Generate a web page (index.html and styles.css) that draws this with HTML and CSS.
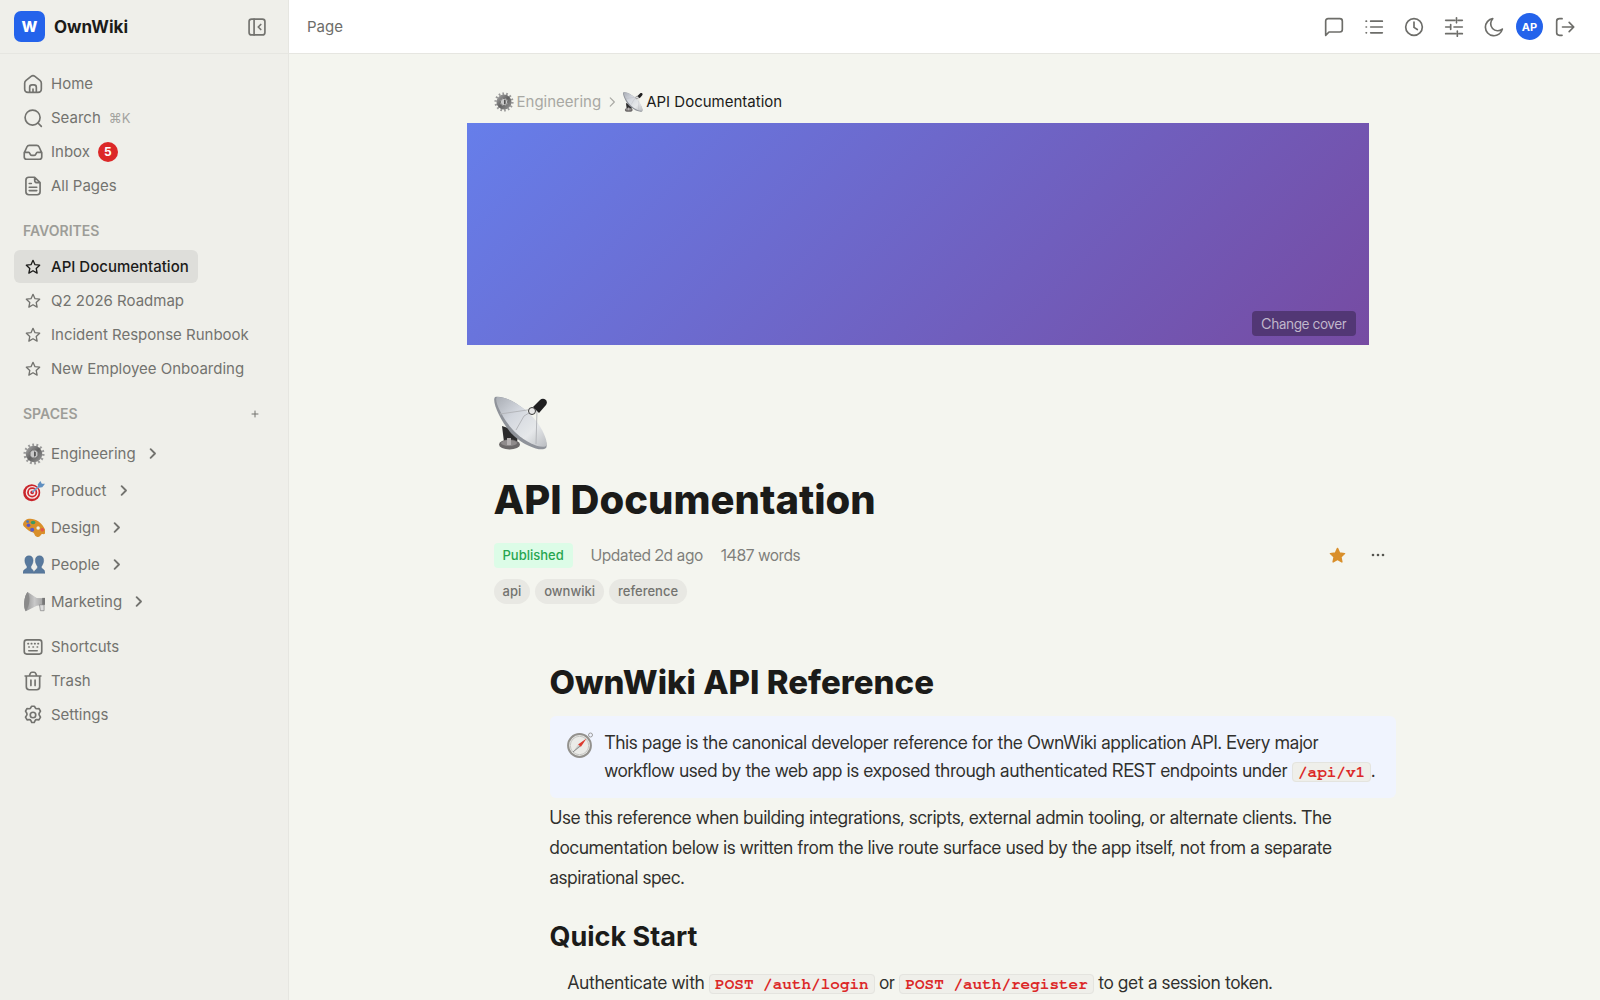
FILE: index.html
```html
<!DOCTYPE html>
<html lang="en">
<head>
<meta charset="utf-8">
<meta name="viewport" content="width=device-width, initial-scale=1">
<title>API Documentation - OwnWiki</title>
<link rel="stylesheet" href="styles.css">
</head>
<body>
<svg class="sprite" aria-hidden="true">
  <defs>
    <linearGradient id="dish-fill" x1="0" y1="0" x2="1" y2="1">
      <stop offset="0" stop-color="#a9adb4"/><stop offset=".35" stop-color="#d3d7de"/><stop offset=".7" stop-color="#e6e8ea"/><stop offset="1" stop-color="#b9bcc0"/>
    </linearGradient>
    <linearGradient id="gear-fill" x1="0" y1="0" x2="1" y2="1">
      <stop offset="0" stop-color="#9c9c9c"/><stop offset=".5" stop-color="#626262"/><stop offset="1" stop-color="#8c8c8c"/>
    </linearGradient>
    <linearGradient id="horn-fill" x1="0" y1="0" x2="1" y2="0">
      <stop offset="0" stop-color="#8b8b8b"/><stop offset=".5" stop-color="#c9c9c9"/><stop offset="1" stop-color="#9a9a9a"/>
    </linearGradient>
    <symbol id="dish" viewBox="0 0 54 54">
      <path d="M8 30l6 2 10 8-1 6H10z" fill="#2b2b2c"/>
      <ellipse cx="15.500" cy="48.500" rx="10.500" ry="5" fill="#6b6868"/>
      <ellipse cx="15" cy="47" rx="8" ry="3" fill="#8f8b8b"/>
      <path d="M13 42h4v7h-4z" fill="#b5b1b1"/>
      <path d="M1 1C9-1 25 7 36 19s19 29 16 33c-4 4-20-1-32-12S-3 5 1 1z" fill="#8f939a"/>
      <path d="M3 1C11 0 26 8 37 19s18 28 15 31c-4 3-18-2-30-13S-1 4 3 1z" fill="url(#dish-fill)"/>
      <path d="M6 18l34-5M22 34l8-14 10-6M42 48l1-34" fill="none" stroke="#b4b6ba" stroke-width="1"/>
      <circle cx="38" cy="15" r="3.500" fill="#e8e8e8" stroke="#3a3a3a"/>
      <path d="M39 11l7-7c3-3 9 0 6 5l-7 8z" fill="#1f1f20"/>
    </symbol>
    <symbol id="gear" viewBox="0 0 24 24">
      <circle cx="12" cy="12" r="10" fill="none" stroke="#9a9a9a" stroke-width="3" stroke-dasharray="2 2.488"/>
      <circle cx="12" cy="12" r="6.800" fill="none" stroke="url(#gear-fill)" stroke-width="4.400"/>
      <circle cx="12" cy="12" r="4.400" fill="#c9c9c9" stroke="#666" stroke-width="1"/>
      <path d="M12 9l2 1v4l-2 1z" fill="#555"/>
    </symbol>
    <symbol id="target" viewBox="0 0 24 24">
      <circle cx="9.500" cy="14" r="9.300" fill="#c9252b"/>
      <circle cx="10" cy="13.500" r="7" fill="#f5eaea"/>
      <circle cx="10" cy="13.500" r="5.500" fill="#d0282e"/>
      <circle cx="10" cy="13.500" r="3.600" fill="#f5eaea"/>
      <circle cx="10" cy="13.500" r="2" fill="#d0282e"/>
      <path d="M10 13.500l9-8" stroke="#6f9fd0" stroke-width="1.600"/>
      <path d="M16 5l3-4 1.500 3L24 4l-3 4-4 .5z" fill="#5f8fc0"/>
    </symbol>
    <symbol id="palette" viewBox="0 0 24 24">
      <path d="M0 8C1 1 10 0 17 5c5 4 9 10 7 13-1 1.500-3 0-4 1s-2 3.500-5 2.500c-3-1-2-3.500-4-4.500s-4-1-7-4c-2.500-2-4-3-4-5z" fill="#d98f2b"/>
      <circle cx="6" cy="9" r="2" fill="#5b56c8"/><circle cx="5" cy="5" r="1.500" fill="#4677c4"/>
      <ellipse cx="11" cy="6" rx="2.500" ry="2" fill="#3b9a62"/><circle cx="10" cy="14" r="2.200" fill="#5a5bc9"/>
      <circle cx="16.500" cy="12" r="1.900" fill="#eef0e6"/><circle cx="21" cy="14" r="2" fill="#e2564a"/>
    </symbol>
    <symbol id="people" viewBox="0 0 24 24">
      <g fill="#58799d" stroke="#48678a" stroke-width=".5">
        <path d="M6.500 2C3.500 2 2 4 2 7s1.500 5 2.500 7c0 3-4.500 2-4.500 7h12c0-4-3.500-4-3.500-7 1-2 2.500-4 2.500-7s-1.500-5-4.500-5z"/>
        <path d="M18 2c-3 0-4.500 2-4.500 5s1.500 5 2.500 7c0 3-4 3-4 7h12c0-5-4-4-4-7 1-2 2.500-4 2.500-7S21 2 18 2z"/>
      </g>
    </symbol>
    <symbol id="horn" viewBox="0 0 24 24">
      <path d="M5 1C1 5 0 18 3 22l12-6 9-1V8l-9-.5z" fill="url(#horn-fill)"/>
      <path d="M5 1c3 5 3 14-2 21C0 17 1 6 5 1z" fill="#8a8a8a"/>
      <path d="M18 15h5v6.500h-4z" fill="#ddd" stroke="#888" stroke-width=".8"/>
      <path d="M21 7.500h3V15h-3z" fill="#777"/>
    </symbol>
    <symbol id="compass" viewBox="0 0 26 26">
      <circle cx="23.500" cy="3" r="2" fill="none" stroke="#9c9c9c"/>
      <circle cx="12.500" cy="13.500" r="11.400" fill="#ebebe8" stroke="#93918d" stroke-width="2"/>
      <circle cx="12.500" cy="13.500" r="9.200" fill="none" stroke="#c6c6c3"/>
      <path d="M19.500 6.500l-8.500 6 2.800 2.600z" fill="#dc3b30"/>
      <path d="M6 20l5-7.500 2.800 2.600z" fill="#d2d2cf"/><path d="M6 20l7-6" stroke="#888"/>
    </symbol>
    <symbol id="star" viewBox="0 0 24 24"><path d="M12 2l3 6.500 7 .8-5.200 4.800 1.400 7L12 17.600l-6.200 3.500 1.400-7L2 9.300l7-.8z"/></symbol>
    <symbol id="chev" viewBox="0 0 24 24"><path d="M9 5l7 7-7 7"/></symbol>
  </defs>
</svg>
<div class="app">
  <aside class="sidebar">
    <div class="brand">
      <span class="logo">W</span>
      <span class="brand-name">OwnWiki</span>
      <button class="icon-btn collapse" type="button" aria-label="Collapse sidebar">
        <svg class="icon" viewBox="0 0 24 24"><rect x="2.500" y="2.500" width="19" height="19" rx="3"/><path d="M8.500 2.500v19M16.500 9l-3 3 3 3"/></svg>
      </button>
    </div>
    <nav class="nav" aria-label="Main">
      <ul class="list">
        <li><a class="item" href="#"><svg class="icon" viewBox="0 0 24 24"><path d="M2 11c0-1.500.5-2.400 1.700-3.400l6-4.800c1.500-1.200 3.100-1.200 4.600 0l6 4.800C21.500 8.600 22 9.500 22 11v7c0 2.700-1.300 4-4 4H6c-2.700 0-4-1.300-4-4zM8 22v-6c0-2 1-3 2.800-3h2.400c1.800 0 2.800 1 2.800 3v6M12 18v4"/></svg>Home</a></li>
        <li><a class="item" href="#"><svg class="icon" viewBox="0 0 24 24"><circle cx="11.500" cy="11.500" r="9"/><path d="M18 18l4 4"/></svg>Search<kbd class="hint">⌘K</kbd></a></li>
        <li><a class="item" href="#"><svg class="icon" viewBox="0 0 24 24"><path d="M1.500 13l3.300-7.300C5.400 4.400 6.200 4 7.500 4h9c1.300 0 2.100.4 2.700 1.700L22.500 13v5c0 1.800-.9 2.700-2.700 2.700H4.200c-1.800 0-2.700-.9-2.700-2.700zM1.500 12.500H7c1.500 0 1 3.500 3.500 3.500h3c2.500 0 2-3.500 3.500-3.500h5.500"/></svg>Inbox<span class="count">5</span></a></li>
        <li><a class="item" href="#"><svg class="icon" viewBox="0 0 24 24"><path d="M14 1.500H7C4.500 1.500 3.500 2.600 3.500 5v14c0 2.400 1 3.500 3.500 3.500h10c2.500 0 3.500-1.100 3.500-3.500V8zM14 1.500V5c0 2 1 3 3 3h3.500M7.500 9H10M7.500 13.500h9M7.500 17.500h9"/></svg>All Pages</a></li>
      </ul>
      <div class="group"><h2 class="label">FAVORITES</h2></div>
      <ul class="list">
        <li><a class="item active" href="#" aria-current="page"><svg class="icon star"><use href="#star"/></svg>API Documentation</a></li>
        <li><a class="item" href="#"><svg class="icon star"><use href="#star"/></svg>Q2 2026 Roadmap</a></li>
        <li><a class="item" href="#"><svg class="icon star"><use href="#star"/></svg>Incident Response Runbook</a></li>
        <li><a class="item" href="#"><svg class="icon star"><use href="#star"/></svg>New Employee Onboarding</a></li>
      </ul>
      <div class="group"><h2 class="label">SPACES</h2><button class="add" type="button" aria-label="Add space"><svg class="icon mini" viewBox="0 0 24 24"><path d="M12 3v18M3 12h18"/></svg></button></div>
      <ul class="list spaces">
        <li><a class="item" href="#"><svg class="emoji"><use href="#gear"/></svg>Engineering<svg class="icon chev"><use href="#chev"/></svg></a></li>
        <li><a class="item" href="#"><svg class="emoji"><use href="#target"/></svg>Product<svg class="icon chev"><use href="#chev"/></svg></a></li>
        <li><a class="item" href="#"><svg class="emoji"><use href="#palette"/></svg>Design<svg class="icon chev"><use href="#chev"/></svg></a></li>
        <li><a class="item" href="#"><svg class="emoji"><use href="#people"/></svg>People<svg class="icon chev"><use href="#chev"/></svg></a></li>
        <li><a class="item" href="#"><svg class="emoji"><use href="#horn"/></svg>Marketing<svg class="icon chev"><use href="#chev"/></svg></a></li>
      </ul>
      <ul class="list">
        <li><a class="item" href="#"><svg class="icon" viewBox="0 0 24 24"><rect x="1.500" y="3.500" width="21" height="17" rx="3"/><path d="M6 8h.5M10 8h.5M14 8h.5M18 8h.5M7 12h.5M12 12h.5M17 12h.5M7 16.500h10"/></svg>Shortcuts</a></li>
        <li><a class="item" href="#"><svg class="icon" viewBox="0 0 24 24"><path d="M2.500 6h19M4 6v13c0 2.400 1 3.500 3.500 3.500h9c2.500 0 3.500-1.100 3.500-3.500V6M7.500 6l1.200-3c.4-1 .9-1.500 2-1.500h2.600c1.100 0 1.600.5 2 1.500l1.200 3M9.500 11v6.500M14.500 11v6.500"/></svg>Trash</a></li>
        <li><a class="item" href="#"><svg class="icon" viewBox="0 0 24 24"><circle cx="12" cy="12" r="3.300"/><path d="M9.400 3.200 10.200 1.500h3.600l.8 1.700c.4.900 1.300 1.400 2.200 1.300l2.300-.3 1.900 3.200-1.400 2.200c-.6.900-.6 1.900 0 2.800l1.400 2.200-1.900 3.200-2.500-.3c-.9-.1-1.700.4-2.100 1.200l-1 2.300h-3l-1-2.300c-.4-.8-1.200-1.300-2.100-1.200l-2.500.3L3 14.600l1.400-2.200c.6-.9.6-1.900 0-2.800L3 7.400l1.900-3.200 2.300.3c.9.100 1.800-.4 2.200-1.300z"/></svg>Settings</a></li>
      </ul>
    </nav>
  </aside>
  <div class="main">
    <header class="topbar">
      <span class="crumb-title">Page</span>
      <div class="tools">
        <button class="icon-btn" type="button" aria-label="Comments"><svg class="icon" viewBox="0 0 24 24"><path d="M2 22V5c0-1.800 1-3 3-3h14c2 0 3 1.200 3 3v10c0 2-1 3-3 3H6z"/></svg></button>
        <button class="icon-btn" type="button" aria-label="Contents"><svg class="icon" viewBox="0 0 24 24"><path d="M8 5h14M8 12h14M8 19h14M2.500 5h.5M2.500 12h.5M2.500 19h.5"/></svg></button>
        <button class="icon-btn" type="button" aria-label="History"><svg class="icon" viewBox="0 0 24 24"><circle cx="12" cy="12" r="10"/><path d="M12 6v6.500l4 2.500"/></svg></button>
        <button class="icon-btn" type="button" aria-label="Properties"><svg class="icon" viewBox="0 0 24 24"><path d="M2 4h11M17 4h5M15 1v6M2 12h6M12 12h10M8 9v6M2 20h12M18 20h4M16 17v6"/></svg></button>
        <button class="icon-btn" type="button" aria-label="Dark mode"><svg class="icon" viewBox="0 0 24 24"><path d="M22 14.500A8.500 8.500 0 0 1 10.500 2 10.300 10.300 0 1 0 22 14.500z"/></svg></button>
        <button class="avatar" type="button">AP</button>
        <button class="icon-btn" type="button" aria-label="Sign out"><svg class="icon" viewBox="0 0 24 24"><path d="M8.500 2H5.500C3.500 2 2 3 2 5v14c0 2 1.500 3 3.500 3h3M9 12h13M17 6.500l5.500 5.500-5.500 5.500"/></svg></button>
      </div>
    </header>
    <main class="page">
      <nav class="crumbs" aria-label="Breadcrumb">
        <a class="crumb" href="#"><svg class="emoji"><use href="#gear"/></svg>Engineering</a>
        <svg class="icon sep"><use href="#chev"/></svg>
        <a class="crumb current" href="#"><svg class="emoji"><use href="#dish"/></svg>API Documentation</a>
      </nav>
      <div class="cover"><button class="cover-btn" type="button">Change cover</button></div>
      <svg class="page-icon"><use href="#dish"/></svg>
      <h1 class="title">API Documentation</h1>
      <div class="meta">
        <span class="status">Published</span>
        <span>Updated 2d ago</span>
        <span>1487 words</span>
        <div class="actions">
          <button class="icon-btn" type="button" aria-label="Remove from favorites"><svg class="icon fav"><use href="#star"/></svg></button>
          <button class="icon-btn" type="button" aria-label="More actions"><svg class="more" viewBox="0 0 14 4"><circle cx="2" cy="2" r="1.300"/><circle cx="7" cy="2" r="1.300"/><circle cx="12" cy="2" r="1.300"/></svg></button>
        </div>
      </div>
      <div class="tags"><span class="tag">api</span><span class="tag">ownwiki</span><span class="tag">reference</span></div>
      <article class="doc">
        <h1 class="doc-h1">OwnWiki API Reference</h1>
        <div class="callout">
          <svg class="callout-icon"><use href="#compass"/></svg>
          <p class="callout-text">This page is the canonical developer reference for the OwnWiki application API. Every major workflow used by the web app is exposed through authenticated REST endpoints under <code>/api/v1</code>.</p>
        </div>
        <p class="para">Use this reference when building integrations, scripts, external admin tooling, or alternate clients. The documentation below is written from the live route surface used by the app itself, not from a separate aspirational spec.</p>
        <h2 class="doc-h2">Quick Start</h2>
        <ul class="steps"><li>Authenticate with <code>POST /auth/login</code> or <code>POST /auth/register</code> to get a session token.</li></ul>
      </article>
    </main>
  </div>
</div>
</body>
</html>
```
FILE: styles.css
```css
*, *::before, *::after { box-sizing: border-box; }

body {
  margin: 0;
  background: #f4f5ef;
  color: #1b1b19;
  font: 15px/20px Inter, "Liberation Sans", sans-serif;
}

h1, h2, p, ul { margin: 0; padding: 0; }
ul { list-style: none; }
a { color: inherit; text-decoration: none; }
button { padding: 0; border: 0; background: none; color: inherit; font: inherit; cursor: pointer; }

.sprite { position: absolute; width: 0; height: 0; }

.icon {
  flex: none;
  width: 20px;
  height: 20px;
  fill: none;
  stroke: currentColor;
  stroke-width: 2;
  stroke-linecap: round;
  stroke-linejoin: round;
}

.emoji { flex: none; width: 22px; height: 22px; }

.app { display: grid; grid-template-columns: 289px minmax(0, 1fr); min-height: 100vh; }

/* Sidebar */
.sidebar { background: #efefea; border-right: 1px solid #e6e6e1; color: #73736f; }

.brand {
  display: flex;
  align-items: center;
  gap: 9px;
  height: 54px;
  padding: 0 13px 0 14px;
  border-bottom: 1px solid #e6e6e1;
}

.logo {
  display: grid;
  place-items: center;
  width: 31px;
  height: 31px;
  border-radius: 7px;
  background: #2463eb;
  color: #fff;
  font-size: 15px;
  font-weight: 800;
}

.brand-name { color: #1b1b19; font-size: 17px; font-weight: 700; }
.icon-btn { display: grid; place-items: center; width: 36px; height: 36px; border-radius: 6px; }
.collapse { margin-left: auto; }

.nav { padding: 13px 14px; }
.list { display: grid; gap: 1px; justify-items: start; }

.item {
  display: flex;
  align-items: center;
  gap: 8px;
  height: 33px;
  padding: 0 9px;
  border-radius: 6px;
  white-space: nowrap;
}

.item.active { background: #dededa; color: #1b1b19; font-weight: 500; }
.star { width: 16px; height: 16px; margin: 0 2px; }
.hint { color: #a3a39f; font: 13px/20px Inter, "DejaVu Sans", sans-serif; }

.count {
  display: grid;
  place-items: center;
  width: 20px;
  height: 20px;
  border-radius: 50%;
  background: #dc2828;
  color: #fff;
  font-size: 12px;
  font-weight: 700;
}

.group { display: flex; align-items: center; justify-content: space-between; height: 48px; padding: 10px 9px 0; }
.label { color: #9d9d98; font-size: 14px; line-height: 18px; font-weight: 600; }
.add { display: grid; place-items: center; width: 20px; height: 20px; }
.mini { width: 8px; height: 8px; stroke-width: 3; }

.spaces { gap: 0; padding: 2px 0 10px; }
.spaces .item { height: 37px; gap: 6px; }
.chev { width: 15px; height: 15px; margin-left: 3px; stroke-width: 3; }

/* Top bar */
.main { min-width: 0; }

.topbar {
  display: flex;
  align-items: center;
  justify-content: space-between;
  height: 54px;
  padding: 0 17px 0 18px;
  background: #fff;
  border-bottom: 1px solid #e6e6e1;
  color: #6d6d69;
}

.tools { display: flex; align-items: center; gap: 4px; }

.avatar {
  width: 27px;
  height: 27px;
  border-radius: 50%;
  background: #2463eb;
  color: #fff;
  font-size: 11px;
  font-weight: 700;
}

/* Page */
.page { max-width: 902px; margin: 0 auto; padding-top: 38px; }

.crumbs { display: flex; align-items: center; gap: 4px; height: 20px; color: #a8a8a3; }
.crumb { display: flex; align-items: center; gap: 3px; }
.crumb.current { color: #1b1b19; }
.crumbs .emoji { width: 20px; height: 20px; }
.sep { width: 14px; height: 14px; }

.cover {
  display: flex;
  align-items: flex-end;
  justify-content: flex-end;
  height: 222px;
  margin: 11px 27px 0 -27px;
  padding: 9px 13px;
  background: linear-gradient(135deg, #667eea 0%, #764ba2 100%);
}

.cover-btn {
  height: 25px;
  padding: 0 9px;
  border-radius: 4px;
  background: #523775;
  color: #c1b8cc;
  font-family: "Inter Display", Inter, sans-serif;
  font-size: 14px;
}

.page-icon { display: block; width: 54px; height: 54px; margin-top: 51px; }
.title { margin-top: 26px; font-size: 40px; line-height: 48px; font-weight: 800; }

.meta {
  display: flex;
  align-items: center;
  gap: 18px;
  height: 36px;
  margin-top: 13px;
  color: #7f7f7b;
  font-family: "Inter Display", Inter, sans-serif;
  font-size: 16px;
}

.status {
  padding: 0 9px;
  border-radius: 4px;
  background: #dcfce7;
  color: #27a650;
  font: 500 13px/25px Inter, sans-serif;
}

.actions { display: flex; gap: 4px; margin-left: auto; color: #55554f; }
.fav { width: 17px; height: 17px; fill: #d98f2b; color: #d98f2b; }
.more { width: 14px; height: 4px; fill: currentColor; }

.tags { display: flex; gap: 5px; margin-top: 6px; }
.tag { padding: 0 9px; border-radius: 13px; background: #e8e8e3; color: #73736f; font-size: 13px; line-height: 25px; font-weight: 500; }

/* Document body */
.doc {
  padding: 56px 0 0 56px;
  color: #30302d;
  font-family: "Inter Display", Inter, sans-serif;
  font-size: 18px;
}

.doc-h1, .doc-h2 { color: #1b1b19; font-family: Inter, sans-serif; }
.doc-h1 { font-size: 33px; line-height: 44px; font-weight: 800; }
.callout { display: flex; gap: 12px; margin-top: 12px; padding: 13px 17px; border-radius: 6px; background: #f0f4fe; }
.callout-icon { flex: none; width: 26px; height: 26px; margin-top: 3px; }
.callout-text { line-height: 28px; }
.para { margin-top: 5px; padding-right: 36px; line-height: 30px; }
.doc-h2 { margin-top: 26px; font-size: 27px; line-height: 36px; font-weight: 700; }
.steps { margin-top: 13px; padding-left: 18px; line-height: 30px; }

code {
  padding: 1px 5px;
  border: 1px solid #e4e4df;
  border-radius: 4px;
  background: #efefea;
  color: #dc2828;
  font: bold 16px/18px "Courier 10 Pitch", FreeMono, "Nimbus Mono PS", Courier, "Liberation Mono", monospace;
}
```
